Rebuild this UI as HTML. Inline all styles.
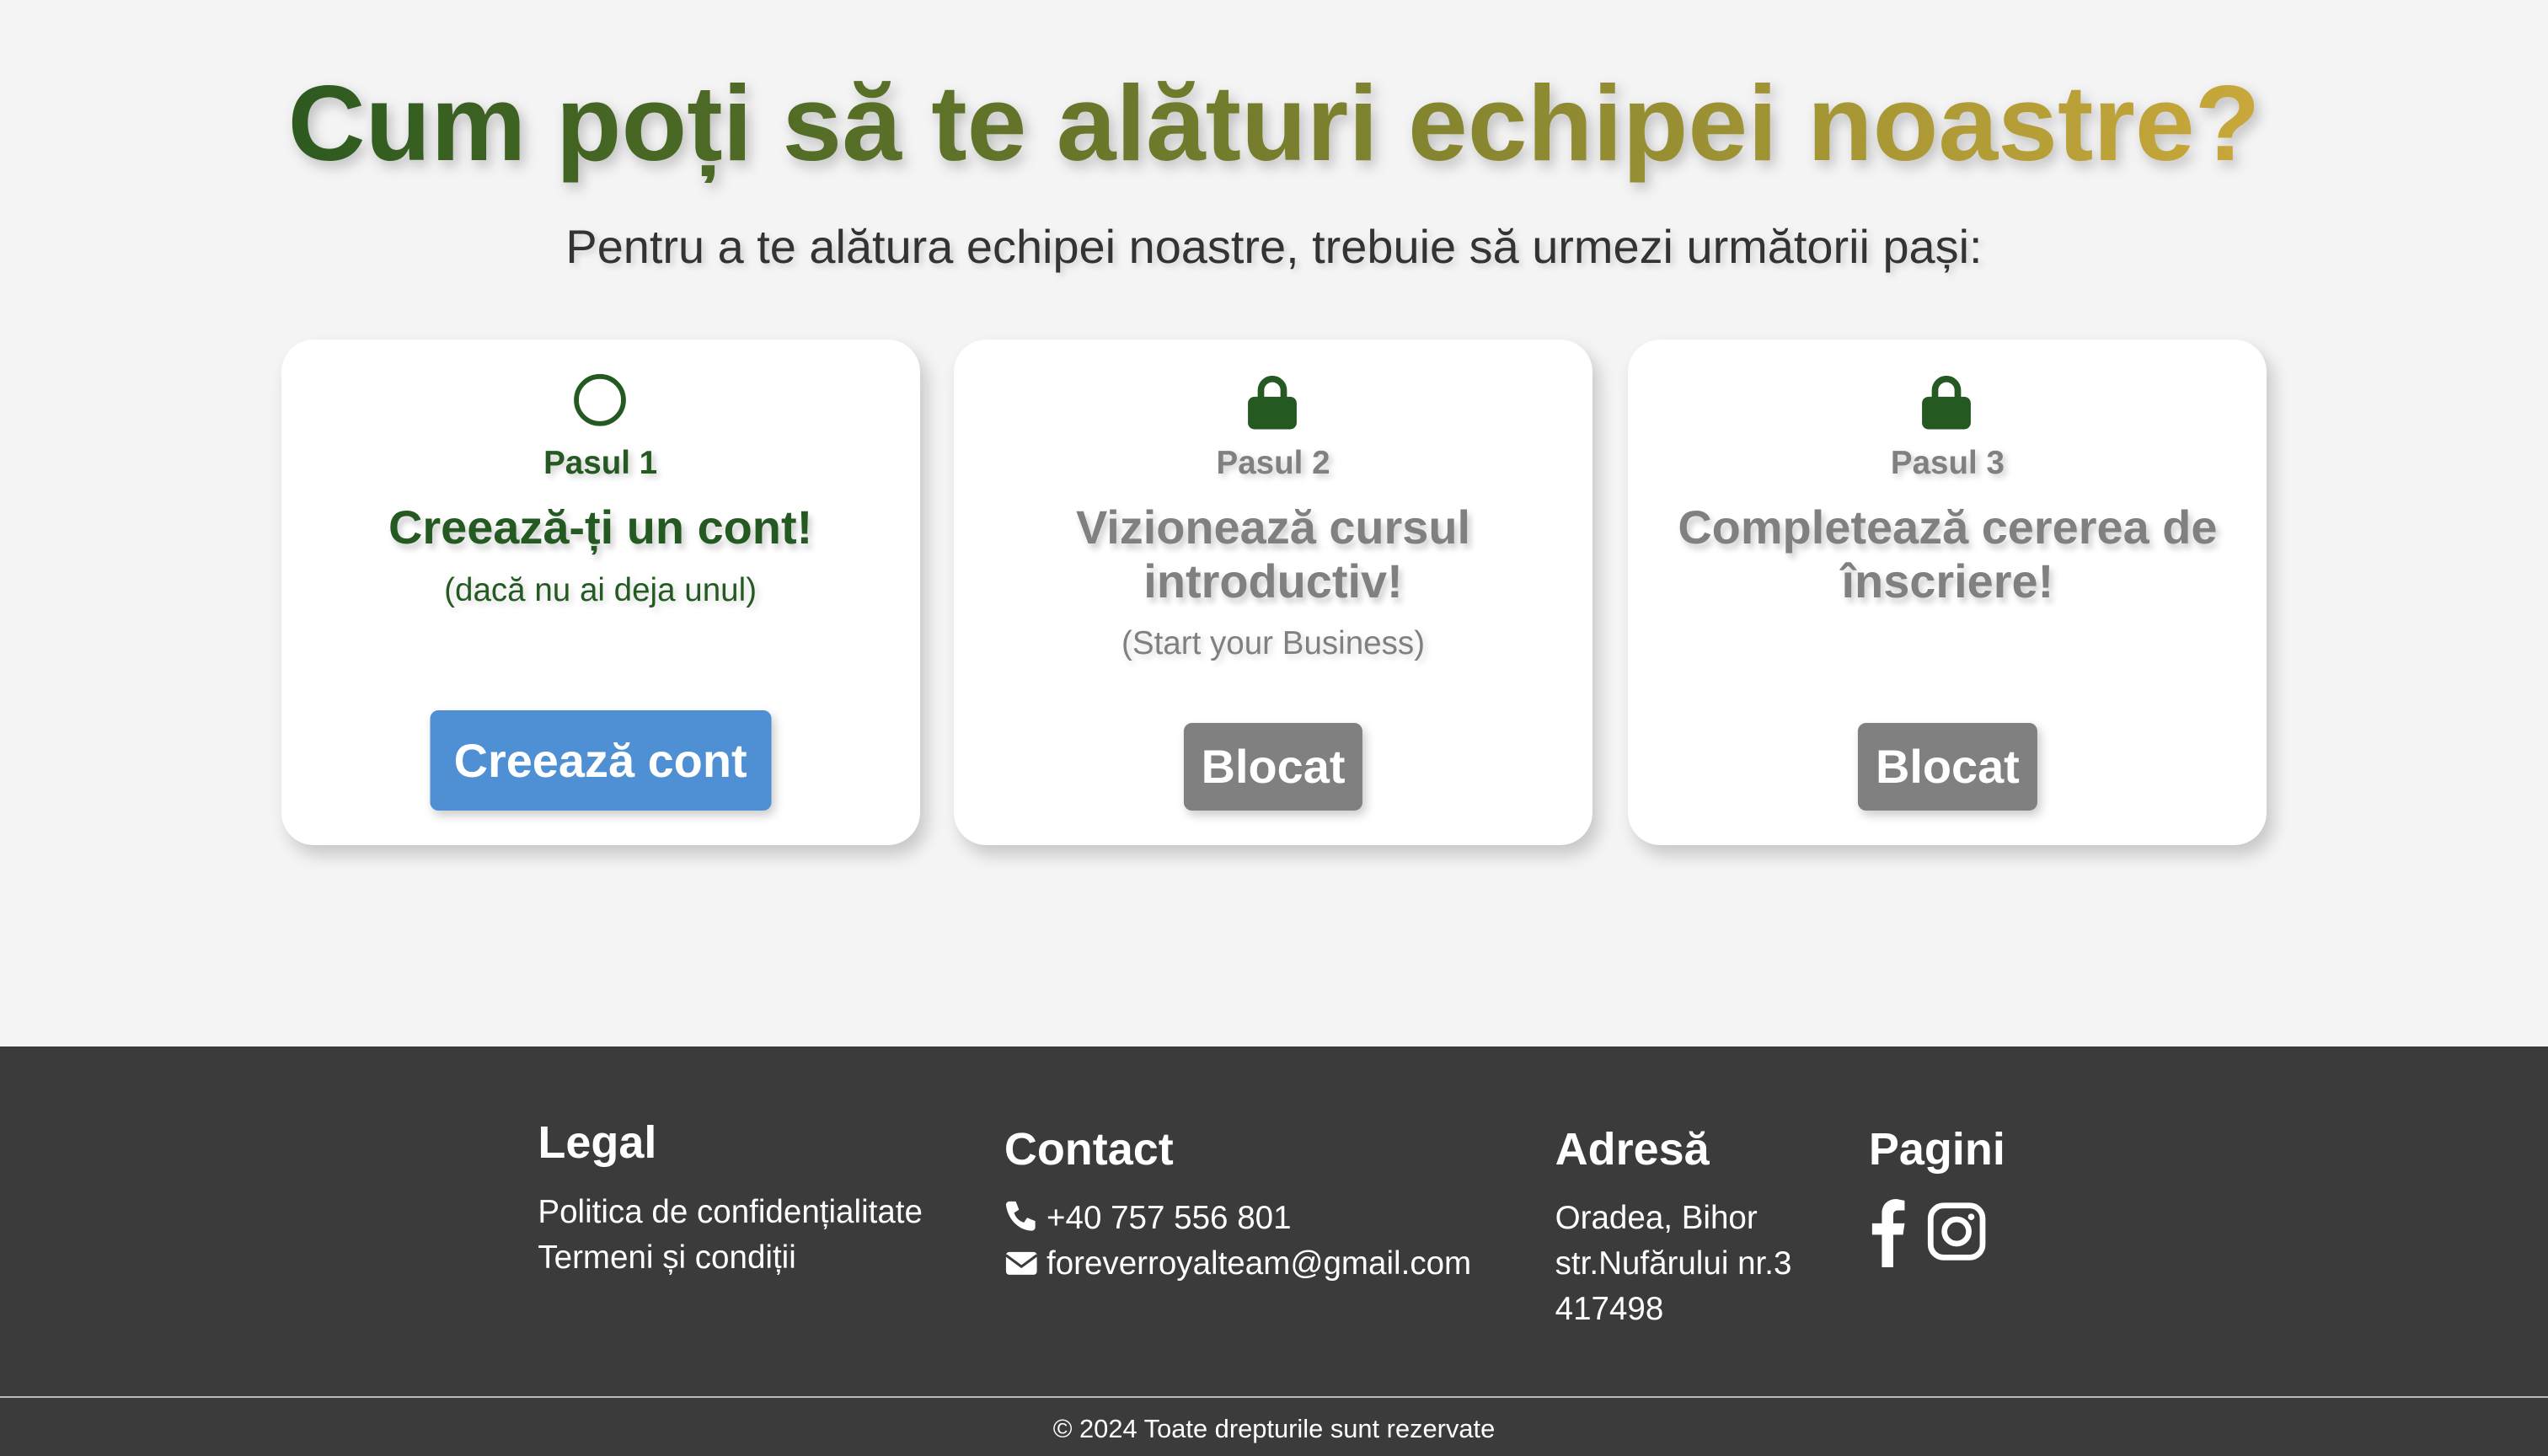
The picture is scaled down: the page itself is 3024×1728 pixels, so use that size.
<!DOCTYPE html>
<html><head><meta charset="utf-8"><style>
html,body{margin:0;padding:0}
body{width:1568px;height:896px;zoom:1.928571;background:#f4f4f4;font-family:"Liberation Sans",Arial,sans-serif;position:relative;overflow:hidden}
h1{position:absolute;left:0;width:1568px;top:31px;margin:0;text-align:center;font-size:66px;font-weight:bold;line-height:90px;}
h1 span{background:linear-gradient(90deg,#2d5a1f 0%,#6f7a2c 45%,#c9a83a 100%);-webkit-background-clip:text;background-clip:text;color:transparent;filter:drop-shadow(3px 4px 4px rgba(0,0,0,.22))}
.sub{position:absolute;top:135px;width:1568px;text-align:center;font-size:29px;color:#333;text-shadow:2px 2px 4px rgba(0,0,0,.15)}
.card{position:absolute;top:209px;width:393px;height:311px;background:#fff;border-radius:20px;box-shadow:4px 6px 10px rgba(0,0,0,.18);text-align:center}
.icon{position:absolute;left:0;width:100%;top:20px;height:36px}
.pas{position:absolute;top:65px;width:100%;font-size:20px;font-weight:bold;text-shadow:2px 2px 4px rgba(0,0,0,.2)}
.t{position:absolute;top:99px;width:100%;font-size:29px;font-weight:bold;line-height:33px;text-shadow:2px 3px 4px rgba(0,0,0,.2)}
.s{position:absolute;width:100%;font-size:20px;text-shadow:2px 2px 4px rgba(0,0,0,.15)}
.g{color:#245a22}.gr{color:#808080}
.btn{position:absolute;left:50%;transform:translateX(-50%);color:#fff;font-weight:bold;border-radius:5px;box-shadow:2px 3px 6px rgba(0,0,0,.2);line-height:62px}
footer{position:absolute;left:0;top:644px;width:1568px;height:252px;background:#3b3b3b;color:#fff}
.fh{position:absolute;font-size:28px;font-weight:bold}
.ft{position:absolute;font-size:20px;line-height:28px}
.line{position:absolute;top:215px;left:0;width:100%;height:1px;background:#bbb}
.copy{position:absolute;top:226px;width:100%;text-align:center;font-size:16px}
</style></head><body>
<h1><span>Cum poți să te alături echipei noastre?</span></h1>
<div class="sub">Pentru a te alătura echipei noastre, trebuie să urmezi următorii pași:</div>

<div class="card" style="left:173px">
 <svg class="icon" viewBox="0 0 393 36"><circle cx="196" cy="17" r="14.5" fill="none" stroke="#245a22" stroke-width="3"/></svg>
 <div class="pas g">Pasul 1</div>
 <div class="t g">Creează-ți un cont!</div>
 <div class="s g" style="top:143px">(dacă nu ai deja unul)</div>
 <div class="btn" style="top:228px;width:210px;height:62px;background:#4f8fd3;font-size:29px">Creează cont</div>
</div>
<div class="card" style="left:587px">
 <svg class="icon" viewBox="0 0 393 36"><path d="M189 16v-5a7 7 0 0 1 14 0v5" fill="none" stroke="#245a22" stroke-width="4"/><rect x="181" y="15" width="30" height="20" rx="4" fill="#245a22"/></svg>
 <div class="pas gr">Pasul 2</div>
 <div class="t gr">Vizionează cursul<br>introductiv!</div>
 <div class="s gr" style="top:176px">(Start your Business)</div>
 <div class="btn" style="top:236px;width:110px;height:54px;line-height:54px;background:#808080;font-size:29px">Blocat</div>
</div>
<div class="card" style="left:1002px">
 <svg class="icon" viewBox="0 0 393 36"><path d="M189 16v-5a7 7 0 0 1 14 0v5" fill="none" stroke="#245a22" stroke-width="4"/><rect x="181" y="15" width="30" height="20" rx="4" fill="#245a22"/></svg>
 <div class="pas gr">Pasul 3</div>
 <div class="t gr">Completează cererea de<br>înscriere!</div>
 <div class="btn" style="top:236px;width:110px;height:54px;line-height:54px;background:#808080;font-size:29px">Blocat</div>
</div>

<footer>
 <div class="fh" style="left:331px;top:43px">Legal</div>
 <div class="ft" style="left:331px;top:88px">Politica de confidențialitate<br>Termeni și condiții</div>
 <div class="fh" style="left:618px;top:47px">Contact</div>
 <div class="ft" style="left:618px;top:92px">
  <svg width="26" height="20" viewBox="0 0 26 20" style="vertical-align:-2px"><path d="M3 1l4 0 2 5-3 2c1 3 3 5 6 6l2-3 5 2v4c0 1-1 2-2 2C9 19 2 12 1 3c0-1 1-2 2-2z" fill="#fff"/></svg>+40 757 556 801<br>
  <svg width="26" height="18" viewBox="0 0 26 18" style="vertical-align:-2px"><rect x="1" y="2" width="19" height="14" rx="2" fill="#fff"/><path d="M1 4l9.5 7L20 4" fill="none" stroke="#3b3b3b" stroke-width="1.6"/></svg>foreverroyalteam@gmail.com</div>
 <div class="fh" style="left:957px;top:47px">Adresă</div>
 <div class="ft" style="left:957px;top:92px">Oradea, Bihor<br>str.Nufărului nr.3<br>417498</div>
 <div class="fh" style="left:1150px;top:47px">Pagini</div>
 <svg style="position:absolute;left:1150px;top:94px" width="75" height="42" viewBox="0 0 75 42"><path d="M8 42V22H2v-7h6V9c0-6 4-9 9-9l5 1v6h-4c-2 0-3 1-3 3v5h7l-1 7h-6v20z" fill="#fff"/><rect x="38" y="4" width="32" height="32" rx="8" fill="none" stroke="#fff" stroke-width="3.5"/><circle cx="54" cy="20" r="7.5" fill="none" stroke="#fff" stroke-width="3.5"/><circle cx="63" cy="11" r="2" fill="#fff"/></svg>
 <div class="line"></div>
 <div class="copy">© 2024 Toate drepturile sunt rezervate</div>
</footer>
</body></html>
